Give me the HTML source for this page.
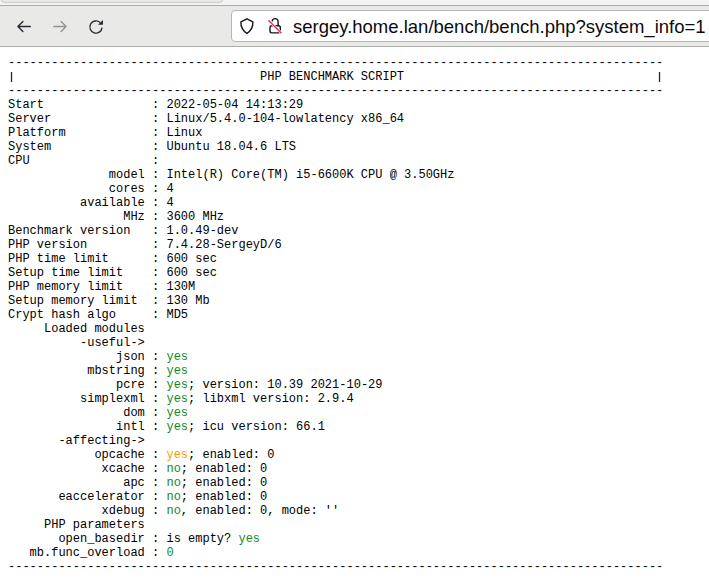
<!DOCTYPE html>
<html><head><meta charset="utf-8">
<style>
html,body{margin:0;padding:0;width:709px;height:578px;overflow:hidden;background:#fff;}
body{position:relative;font-family:"Liberation Sans",sans-serif;}
#tabstrip{position:absolute;left:0;top:0;width:709px;height:5px;background:#f3f3f3;}
#tab{position:absolute;left:1px;top:-6px;width:222px;height:8px;background:#e9e9e9;border:1px solid #cdcdcd;border-top:0;border-radius:0 0 4px 4px;box-sizing:border-box;height:9px;}
#tbline{position:absolute;left:0;top:5px;width:709px;height:1px;background:#ababab;}
#toolbar{position:absolute;left:0;top:6px;width:709px;height:40px;background:#e9e9e8;}
#tbbottom{position:absolute;left:0;top:46px;width:709px;height:1px;background:#adadaa;}
#urlbar{position:absolute;left:231px;top:10px;width:490px;height:30px;background:#fff;border:1px solid #b6b6b3;border-radius:4px;}
#url{position:absolute;left:293px;top:16px;font-size:18.5px;line-height:22px;color:#0b0b0e;white-space:nowrap;}
svg{position:absolute;}
pre{position:absolute;left:8px;top:56px;margin:0;font-family:"Liberation Mono",monospace;font-size:12px;line-height:14px;color:#000;}
.g{color:#118a1c;}
.o{color:#ff9a00;}
.p{color:transparent;}
.bar{position:absolute;top:72px;width:1px;height:10px;background:#5a0a34;box-shadow:-0.5px 0 0 rgba(140,60,60,.35),0.5px 0 0 rgba(60,40,120,.35);}
</style></head><body>
<div id="tabstrip"></div>
<div id="tab"></div>
<div id="tbline"></div>
<div id="toolbar"></div>
<div id="tbbottom"></div>
<div id="urlbar"></div>
<div class="bar" style="left:11px"></div>
<div class="bar" style="left:659px"></div>
<svg style="left:0;top:0" width="709" height="50" viewBox="0 0 709 50">
<path d="M30.3 26.5 H17.9 M22.9 21.5 L17.9 26.5 L22.9 31.5" fill="none" stroke="#2b2a33" stroke-width="1.4" stroke-linecap="round" stroke-linejoin="round"/>
<path d="M53.8 26.5 H66.1 M61.1 21.5 L66.1 26.5 L61.1 31.5" fill="none" stroke="#939397" stroke-width="1.4" stroke-linecap="round" stroke-linejoin="round"/>
<path d="M102.05 27.6 A6.1 6.1 0 1 1 100.1 22.5" fill="none" stroke="#2b2a33" stroke-width="1.35"/>
<path d="M103 20.1 L103 24.8 L98 24.8 Z" fill="#2b2a33"/>
<path d="M246.9 18.8 L252.9 21.9 C253.1 28 250.5 31 246.9 33.3 C243.3 31 240.7 28 240.9 21.9 Z" fill="none" stroke="#15141a" stroke-width="1.4" stroke-linejoin="round"/>
<path d="M272.2 21.6 A2.95 2.95 0 0 1 278.1 21.6 V25.8" fill="none" stroke="#15141a" stroke-width="1.4"/>
<rect x="270" y="25.8" width="10.3" height="7.1" rx="1.8" fill="none" stroke="#15141a" stroke-width="1.4"/>
<path d="M268.9 20.8 L281.2 32.9" stroke="#fff" stroke-width="2.6"/>
<path d="M268.9 20.8 L281.2 32.9" stroke="#ff1f52" stroke-width="1.35" stroke-linecap="round"/>
</svg>
<div id="url">sergey.home.lan/bench/bench.php?system_info=1</div>
<pre>-------------------------------------------------------------------------------------------
<span class="p">|</span>                                  PHP BENCHMARK SCRIPT                                   <span class="p">|</span>
-------------------------------------------------------------------------------------------
Start               : 2022-05-04 14:13:29
Server              : Linux/5.4.0-104-lowlatency x86_64
Platform            : Linux
System              : Ubuntu 18.04.6 LTS
CPU                 :
              model : Intel(R) Core(TM) i5-6600K CPU @ 3.50GHz
              cores : 4
          available : 4
                MHz : 3600 MHz
Benchmark version   : 1.0.49-dev
PHP version         : 7.4.28-SergeyD/6
PHP time limit      : 600 sec
Setup time limit    : 600 sec
PHP memory limit    : 130M
Setup memory limit  : 130 Mb
Crypt hash algo     : MD5
     Loaded modules
          -useful->
               json : <span class="g">yes</span>
           mbstring : <span class="g">yes</span>
               pcre : <span class="g">yes</span>; version: 10.39 2021-10-29
          simplexml : <span class="g">yes</span>; libxml version: 2.9.4
                dom : <span class="g">yes</span>
               intl : <span class="g">yes</span>; icu version: 66.1
       -affecting->
            opcache : <span class="o">yes</span>; enabled: 0
             xcache : <span class="g">no</span>; enabled: 0
                apc : <span class="g">no</span>; enabled: 0
       eaccelerator : <span class="g">no</span>; enabled: 0
             xdebug : <span class="g">no</span>, enabled: 0, mode: ''
     PHP parameters
       open_basedir : is empty? <span class="g">yes</span>
   mb.func_overload : <span class="g">0</span>
-------------------------------------------------------------------------------------------</pre>
</body></html>
